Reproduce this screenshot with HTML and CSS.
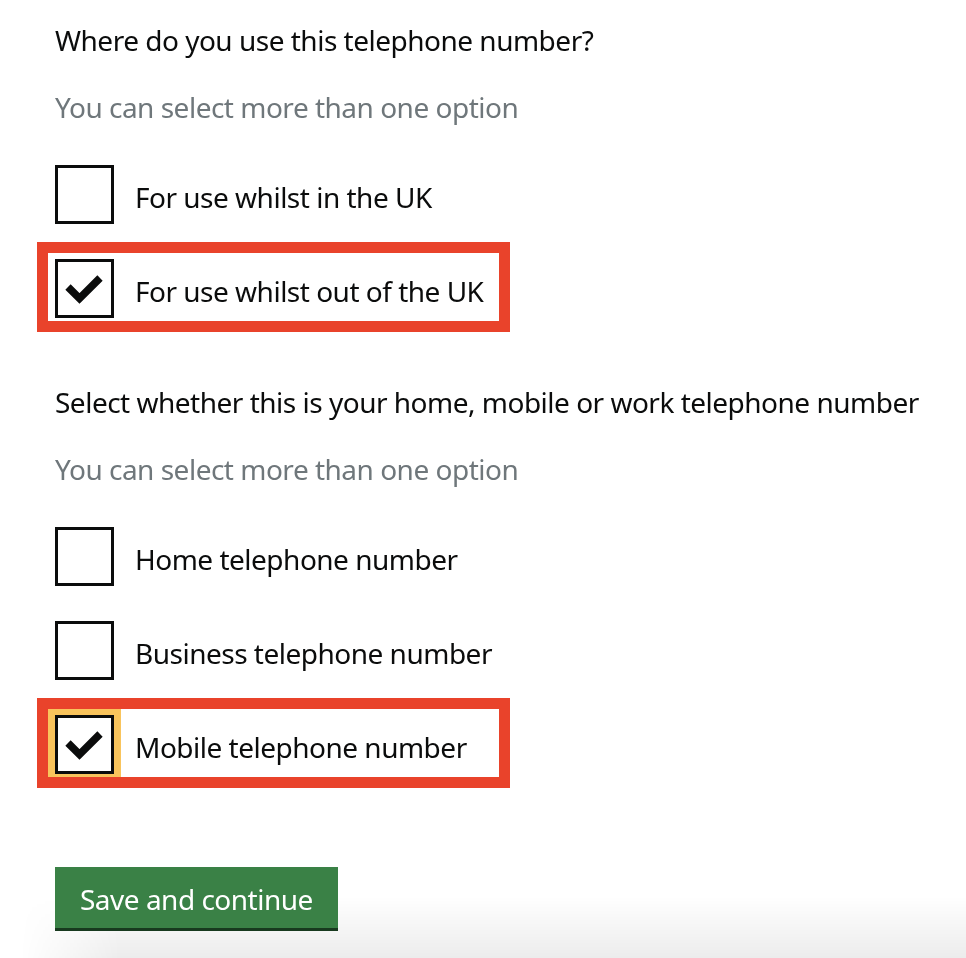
FILE: index.html
```html
<!DOCTYPE html>
<html lang="en">
<head>
<meta charset="utf-8">
<title>Telephone number</title>
<link rel="stylesheet" href="styles.css">
</head>
<body>
<main class="form">
  <section class="group">
    <h2 class="question">Where do you use this telephone number?</h2>
    <p class="hint">You can select more than one option</p>
    <div class="checkboxes">
      <div class="item">
        <span class="box"></span>
        <span class="label">For use whilst in the UK</span>
      </div>
      <div class="item">
        <span class="box"><svg class="tick" viewBox="0 0 59 59" width="59" height="59" aria-hidden="true"><polyline points="13,28 24.5,39.5 45,19" fill="none" stroke="#0b0c0c" stroke-width="7.5"/></svg></span>
        <span class="label">For use whilst out of the UK</span>
        <span class="annotation"></span>
      </div>
    </div>
  </section>

  <section class="group">
    <h2 class="question">Select whether this is your home, mobile or work telephone number</h2>
    <p class="hint">You can select more than one option</p>
    <div class="checkboxes">
      <div class="item">
        <span class="box"></span>
        <span class="label">Home telephone number</span>
      </div>
      <div class="item">
        <span class="box"></span>
        <span class="label">Business telephone number</span>
      </div>
      <div class="item">
        <span class="box box-focus"><svg class="tick" viewBox="0 0 59 59" width="59" height="59" aria-hidden="true"><polyline points="13,28 24.5,39.5 45,19" fill="none" stroke="#0b0c0c" stroke-width="7.5"/></svg></span>
        <span class="label">Mobile telephone number</span>
        <span class="annotation"></span>
      </div>
    </div>
  </section>

  <button class="button" type="button">Save and continue</button>
</main>
<div class="shade" aria-hidden="true"></div>
</body>
</html>
```

FILE: styles.css
```css
html, body {
  margin: 0;
  padding: 0;
  background: #ffffff;
}

body {
  font-family: "Noto Sans", "Open Sans", sans-serif;
  color: #0b0c0c;
  font-size: 28px;
  line-height: 36px;
  letter-spacing: -0.5px;
  height: 958px;
  overflow: hidden;
}

.form {
  padding: 22px 0 0 55px;
  display: flex;
  flex-direction: column;
  align-items: flex-start;
  position: relative;
  z-index: 1;
}

.group {
  display: flex;
  flex-direction: column;
}

.group + .group {
  margin-top: 66px;
}

.question {
  margin: 0;
  font-size: 28px;
  font-weight: 400;
  line-height: 36px;
}

.hint {
  margin: 31px 0 0;
  color: #6f777b;
  line-height: 36px;
}

.checkboxes {
  margin-top: 40px;
  display: flex;
  flex-direction: column;
  gap: 35px;
}

.item {
  position: relative;
  display: flex;
  align-items: center;
  gap: 21px;
  height: 59px;
}

.box {
  box-sizing: border-box;
  width: 59px;
  height: 59px;
  border: 3px solid #0b0c0c;
  background: #fff;
  flex: none;
  position: relative;
}

.tick {
  position: absolute;
  left: -3px;
  top: -3px;
}

.box-focus {
  box-shadow: 0 0 0 7px #f9c45c;
}

.label {
  display: block;
  padding-top: 4px;
}

.annotation {
  position: absolute;
  left: -18px;
  top: -17px;
  width: 473px;
  height: 90px;
  box-sizing: border-box;
  border: 11px solid #e9432b;
  pointer-events: none;
}

.button {
  margin-top: 93px;
  font-family: inherit;
  font-size: 28px;
  line-height: 36px;
  letter-spacing: -0.5px;
  color: #ffffff;
  background: #3a8146;
  border: 0;
  border-radius: 0;
  padding: 14px 25px 11px;
  box-shadow: 0 3px 0 #183a1f;
  cursor: pointer;
}

.shade {
  position: fixed;
  left: 0;
  right: 0;
  bottom: 0;
  height: 62px;
  background: linear-gradient(to bottom, rgba(0,0,0,0), rgba(0,0,0,0.075));
  -webkit-mask-image: linear-gradient(to right, transparent 20px, #000 120px);
  mask-image: linear-gradient(to right, transparent 20px, #000 120px);
  z-index: 0;
}
```
